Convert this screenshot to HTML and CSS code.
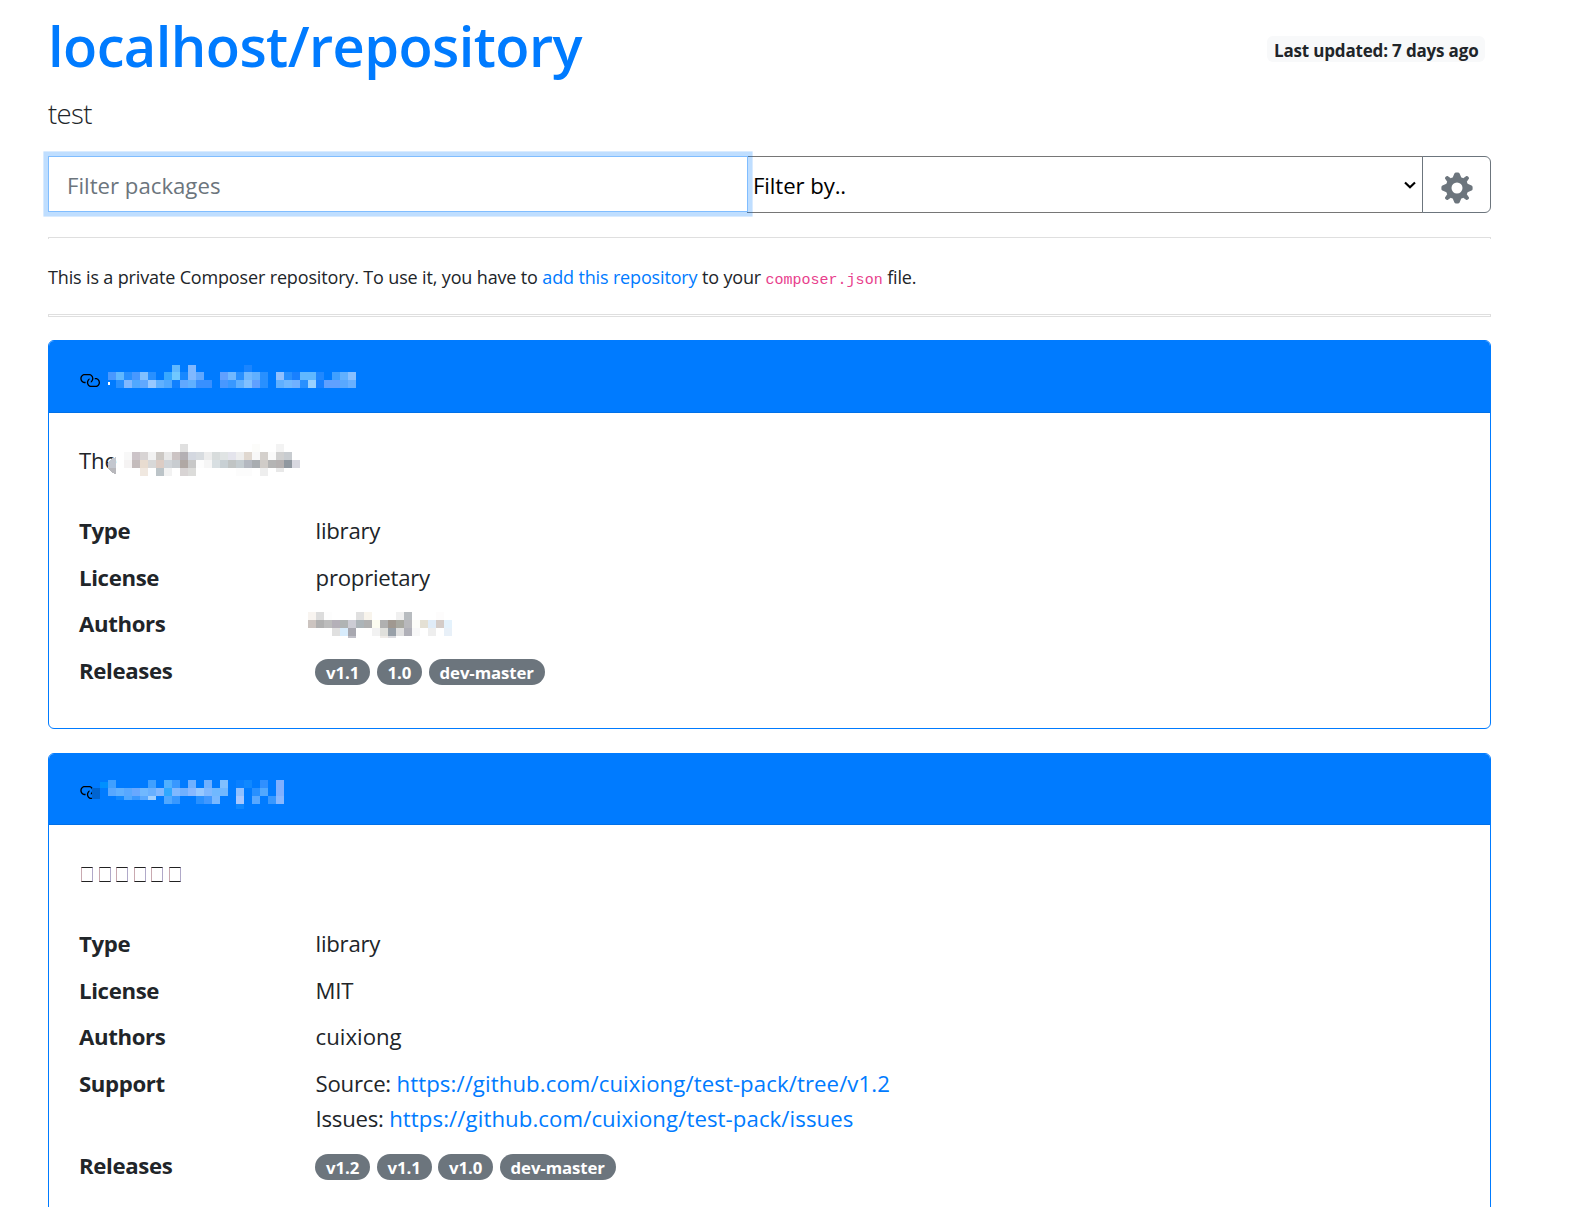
FILE: index.html
```html
<!DOCTYPE html>
<html lang="en">
<head>
<meta charset="utf-8">
<title>localhost/repository</title>
<link rel="stylesheet" href="styles.css">
</head>
<body>
<svg class="sprite" aria-hidden="true">
  <symbol id="link" viewBox="0 0 16 16"><path d="M4 9h1v1H4c-1.5 0-3-1.69-3-3.5S2.55 3 4 3h4c1.45 0 3 1.69 3 3.5 0 1.41-.91 2.72-2 3.25V8.59c.58-.45 1-1.27 1-2.09C10 5.22 8.98 4 8 4H4c-.98 0-2 1.22-2 2.5S3 9 4 9zm9-3h-1v1h1c1 0 2 1.22 2 2.5S13.98 12 13 12H9c-.98 0-2-1.22-2-2.5 0-.83.42-1.64 1-2.09V6.25c-1.09.53-2 1.84-2 3.25C6 11.31 7.55 13 9 13h4c1.45 0 3-1.69 3-3.5S14.5 6 13 6z"/></symbol>
</svg>
<header class="top">
  <h1 class="title"><a href="#">localhost/repository</a></h1>
  <span class="updated">Last updated: 7 days ago</span>
</header>
<p class="lead">test</p>
<form class="filter">
  <input class="filter-text" type="text" placeholder="Filter packages">
  <div class="filter-select">
    <select><option>Filter by..</option></select>
    <svg class="chevron" viewBox="0 0 12 8"><path d="M1 1.5 6 6.2 11 1.5" fill="none" stroke="#000" stroke-width="2.2"/></svg>
  </div>
  <button class="filter-btn" type="button" aria-label="Settings">
    <svg class="gear" viewBox="-16 -16 32 32"><path fill-rule="evenodd" d="M-2.6-14.6Q-2-15.6-1-15.6H1Q2-15.6 2.6-14.6L4.3-10.6Q5.4-10.3 6.2-9.8L9.4-12Q10.400-12.300 11.300-11.300T12-9.400L9.800-6.200Q10.300-5.400 10.600-4.300L14.600-2.600Q15.600-2 15.600-1V1Q15.600 2 14.600 2.600L10.600 4.300Q10.300 5.400 9.800 6.200L12 9.400Q12.300 10.400 11.300 11.300T9.400 12L6.200 9.800Q5.400 10.300 4.300 10.600L2.600 14.600Q2 15.600 1 15.600H-1Q-2 15.600-2.600 14.600L-4.300 10.600Q-5.400 10.300-6.200 9.800L-9.400 12Q-10.400 12.300-11.300 11.300T-12 9.400L-9.800 6.200Q-10.300 5.400-10.600 4.300L-14.600 2.600Q-15.600 2-15.600 1V-1Q-15.600-2-14.600-2.600L-10.600-4.300Q-10.300-5.400-9.800-6.200L-12-9.400Q-12.300-10.400-11.300-11.300T-9.400-12L-6.200-9.800Q-5.400-10.300-4.300-10.600ZM0-5.500A5.500 5.500 0 1 0 0 5.500 5.500 5.500 0 1 0 0-5.500Z"/></svg>
  </button>
</form>
<hr>
<p class="intro">This is a private Composer repository. To use it, you have to <a href="#">add this repository</a> to your <code>composer.json</code> file.</p>
<hr class="closed">

<section class="card">
  <h2 class="card-header"><svg class="link"><use href="#link"/></svg><svg class="mosaic" data-mosaic="name1" width="250" height="24"></svg></h2>
  <div class="card-body">
    <p class="desc">The<svg class="mosaic desc-mosaic" data-mosaic="desc1" width="192" height="32"></svg></p>
    <dl>
      <dt>Type</dt><dd>library</dd>
      <dt>License</dt><dd>proprietary</dd>
      <dt>Authors</dt><dd class="author-hidden"><svg class="mosaic" data-mosaic="author1" width="144" height="27"></svg></dd>
      <dt>Releases</dt><dd class="badges"><span class="badge">v1.1</span><span class="badge">1.0</span><span class="badge">dev-master</span></dd>
    </dl>
  </div>
</section>

<section class="card">
  <h2 class="card-header second"><svg class="link"><use href="#link"/></svg><svg class="mosaic second-mosaic" data-mosaic="name2" width="192" height="30"></svg></h2>
  <div class="card-body roomy">
    <p class="desc tofu"><i></i><i></i><i></i><i></i><i></i><i></i></p>
    <dl>
      <dt>Type</dt><dd>library</dd>
      <dt>License</dt><dd>MIT</dd>
      <dt>Authors</dt><dd class="wide">cuixiong</dd>
      <dt>Support</dt><dd>Source: <a href="#">https://github.com/cuixiong/test-pack/tree/v1.2</a><br>Issues: <a href="#">https://github.com/cuixiong/test-pack/issues</a></dd>
      <dt>Releases</dt><dd class="badges"><span class="badge">v1.2</span><span class="badge">v1.1</span><span class="badge">v1.0</span><span class="badge">dev-master</span></dd>
    </dl>
  </div>
</section>
<script src="mosaic.js"></script>
</body>
</html>
```
FILE: styles.css
```css
* { box-sizing: border-box; }
html { overflow: hidden; }
body {
  margin: 0;
  height: 1207px;
  overflow: hidden;
  padding: 0 86px 0 48px;
  background: #fff;
  color: #212529;
  font: 400 22.2px/35px "Open Sans", "Noto Sans", sans-serif;
}
a { color: #007bff; text-decoration: none; }
.sprite { display: none; }
.top { display: flex; justify-content: space-between; align-items: flex-start; height: 82px; }
.title { margin: 10px 0 0; font-size: 56px; line-height: 70px; font-weight: 600; letter-spacing: -.58px; white-space: nowrap; }
.updated {
  margin: 36px 6px 0 0;
  padding: 0 6.5px;
  height: 26px;
  border-radius: 6px;
  background: #f8f9fa;
  font-size: 17px;
  line-height: 29px;
  font-weight: 700;
  letter-spacing: -.17px;
  white-space: nowrap;
}
.lead { margin: 11px 0 19px; height: 44px; font-size: 27.5px; line-height: 42px; font-weight: 300; letter-spacing: -.6px; }
.filter { display: flex; height: 57px; margin: 0 0 24px; }
.filter-text {
  position: relative;
  z-index: 1;
  width: 700px;
  height: 56px;
  padding: 2px 18px 0;
  border: 1px solid #80bdff;
  outline: none;
  box-shadow: 0 0 0 4.6px rgba(0, 123, 255, .25);
  font: inherit;
  color: #495057;
}
.filter-text::placeholder { color: #6c757d; opacity: 1; }
.filter-select { position: relative; flex: 1; margin-left: -1px; }
.filter-select select {
  appearance: none;
  width: 100%;
  height: 57px;
  padding: 1px 0 0 5px;
  border: 1px solid #767676;
  border-radius: 0;
  background: #fff;
  color: #000;
  font: inherit;
  letter-spacing: -.1px;
}
.chevron { position: absolute; right: 7px; top: 25px; width: 12px; height: 8px; }
.filter-btn {
  width: 69px;
  margin-left: -1px;
  position: relative;
  display: flex;
  align-items: center;
  justify-content: center;
  padding: 6px 0 0;
  border: 1px solid #6c757d;
  border-radius: 0 6px 6px 0;
  background: #fff;
}
.gear { width: 32px; height: 32px; fill: #6c757d; }
hr { height: 2px; margin: 0; border: 1px solid #dfdfdf; border-bottom: 0; }
hr.closed { height: 3px; border-bottom: 1px solid #dfdfdf; }
.intro { margin: 24px 0; height: 27px; font-size: 18px; line-height: 29px; letter-spacing: -.15px; white-space: nowrap; }
.intro code { color: #e83e8c; font: 15px "Liberation Mono", monospace; letter-spacing: 0; }
.card { border: 1px solid #007bff; border-radius: 6px; margin: 23px 0 24px; overflow: hidden; }
.card-header {
  display: flex;
  align-items: flex-start;
  height: 72px;
  margin: 0;
  padding: 0 30px;
  background: #007bff;
  border-bottom: 1px solid #0070e8;
}
.card-header.second { height: 71px; }
.link { width: 21px; height: 21px; margin: 29px 8px 0 -.5px; flex: none; }
.card-header .mosaic { margin-top: 24.4px; }
.second .link { margin-top: 28px; margin-right: -7.500px; }
.card-header .second-mosaic { margin-top: 26px; }
.mosaic { display: block; flex: none; shape-rendering: crispEdges; }
.card-body { padding: 30px 30px 28.4px; }
.desc { display: flex; height: 35px; margin: 0 0 35px; letter-spacing: -.2px; }
.desc-mosaic { margin: 1px 0 0 -8.500px; }
.roomy .desc { margin-bottom: 36px; }
.tofu { padding: 12px 0 0 2px; gap: 5.6px; }
.tofu i { width: 12px; height: 15px; border: solid #222; border-width: 1px; border-left-color: #c9a9b0; border-right-color: #b0a9c9; }
dl { display: grid; grid-template-columns: 236.6px 1fr; row-gap: 11.67px; margin: 0 0 11.67px; }
dt { font-weight: 700; letter-spacing: -.35px; }
dd { margin: 0; letter-spacing: -.25px; }
dd a { letter-spacing: .09px; }
.wide { letter-spacing: 0; }
.author-hidden { margin: 6px 0 -6px -8px; height: 35px; }
.badges { display: flex; gap: 6.4px; padding-top: 6px; height: 35px; margin-left: -.6px; letter-spacing: -.1px; }
.badge { height: 26px; padding: 0 11px; border-radius: 13px; background: #6c757d; color: #fff; font-size: 16.8px; line-height: 27px; font-weight: 700; }
```
FILE: mosaic.js
```js
// Redacted text is drawn as 8px blocks. Each row: [y, height, "column:colour ..."].
const mosaics = {
  name1: { rows: [
    [0, 7, "8:60b8ff 10:80b8ff 17:1a85ff"],
    [7, 8, "0:4898ff 1:60b8ff 2:2890ff 3:4898ff 4:80c0ff 5:2890ff 7:38a8ff 8:70c8ff 9:1888ff 10:80b8ff 11:60a8ff 14:60a0ff 15:70b8ff 16:2890ff 17:70b8ff 18:60b0ff 19:2890ff 21:90c0ff 22:2890ff 23:1880ff 24:60b8ff 25:60b8ff 26:2088ff 28:40a0ff 29:60b0ff 30:88c0ff"],
    [15, 8, "1:2890ff 2:80b8ff 3:50a8ff 4:60a8ff 5:98c8ff 6:60b0ff 7:50a8ff 8:1080ff 9:60a8ff 10:60b0ff 11:3890ff 12:3890ff 14:4898ff 15:3898ff 16:60b0ff 17:80c0ff 18:60a0ff 19:2890ff 21:60b0ff 22:70b8ff 23:70b0ff 24:2890ff 25:98d0ff 26:1880ff 27:60a0ff 28:60a0ff 29:58a8ff 30:68b0ff"],
    [17, 3, "0:ffffff:2"]
  ] },
  name2: { rows: [
    [0, 8, "2:40a0ff 7:40a0ff 9:50b0ff 10:3898ff 12:70b0ff 14:70b0ff 16:80c0ff 18:0a80ff 19:1088ff 21:3090ff 23:80b0ff"],
    [2, 6, "1:0090ff"],
    [8, 8, "2:58a8ff 3:60b0ff 4:58a8ff 5:68a8ff 6:70b8ff 7:68b0ff 8:80b8ff 9:30a8ff 10:80b8ff 11:70b0ff 12:88b8ff 13:98c8ff 14:80b8ff 15:70b8ff 16:70b8ff 18:90c0ff 20:2890ff 21:50a8ff 23:80b0ff"],
    [8, 11, "0:0064d0"],
    [16, 4, "3:1088ff 4:50a8ff 5:3898ff 6:58a8ff 7:a0d0ff"],
    [16, 8, "9:50a8ff 10:3898ff 13:2890ff 14:4098ff 15:78b8ff 18:a8c8ff 20:58a8ff 22:3898ff 23:88b8ff"],
    [24, 5, "18:1088ff"]
  ] },
  desc1: { rows: [
    [0, 8, "9:e0e0e0 18:fcfcfa 21:f3f3f3"],
    [8, 8, "2:f8f8f8 3:ccc4c8 4:d8d4d4 5:f2f2f2 6:ccc8c4 7:e8e8e8 8:ccc4c4 9:b4b0b4 10:d4d8e0 11:d8dce0 12:ededed 13:d8dcdc 14:e0e4e4 15:e4e4ec 16:eeeeee 17:e0d8d0 18:f8f8f8 19:d4d0cc 20:fafafa 21:d0d0d0 22:c8ccd0"],
    [16, 8, "2:f5f3f3 3:c4bcbc 4:e8dcd0 5:d8d8d8 6:dcccc4 7:d0d4d8 8:c8ccd0 9:b0a8a4 10:c8c8c8 11:fdfdfd 12:f6f6f6 13:d8dfe2 14:c8d0d4 15:c0c4c4 16:c4ccd0 17:b4b8c0 18:a8acb0 19:d0ccc8 20:b4b4b4 21:b4b0b0 22:9098a0 23:d8d8e0"],
    [24, 8, "4:f0e8e0 6:bcc4c8 7:f2f2f2 9:d8d4d4 10:dcdcda 16:fcfcfc 17:fcfcfc 19:eeeeee"],
    [24, 4, "21:e8e8e8"]
  ], cap: true },
  author1: { rows: [
    [0, 8, "0:f8f4f0 1:dcdcdc 2:fdfdfd 6:e0e0e0 7:f8f4ec 11:f0f0f0 12:b8bcc0 16:fdfcfc"],
    [8, 8, "0:ccc4c0 1:b0b0b0 2:bcbcbc 3:b4b0b8 4:b0b4b4 5:ccccd4 6:acb4b8 7:b0b0b0 8:fcfcf0 9:b0b0b0 10:a09890 11:a8a8a0 12:b8b8bc 13:fcfcf8 14:e4e0d4 15:e0ecf8 16:d4ccc8 17:e4f2fc"],
    [16, 8, "3:e0e0e0 4:d8ecfc 5:a8a8b0 8:f2f2f2 9:e0e0dc 10:98a0a8 11:e0e0e0 12:b0b0b8 13:f8f8f8 15:eeeeee 17:e8f0f8"],
    [24, 2, "5:c0c0c8 9:f0ece8 10:dcdce0"]
  ] }
};
document.querySelectorAll("[data-mosaic]").forEach(svg => {
  const m = mosaics[svg.dataset.mosaic];
  let out = m.cap ? '<path fill="#c3c7cf" d="M8 13Q0 15 0 21v3h8z"/><path fill="#b8b8bc" d="M0 24h8v6Q2 29 0 24z"/>' : "";
  for (const [y, h, cells] of m.rows)
    for (const cell of cells.split(" ")) {
      const [col, colour, w] = cell.split(":");
      out += `<rect x="${col * 8}" y="${y}" width="${w || 8}" height="${h}" fill="#${colour}"/>`;
    }
  svg.innerHTML = out;
});
```
